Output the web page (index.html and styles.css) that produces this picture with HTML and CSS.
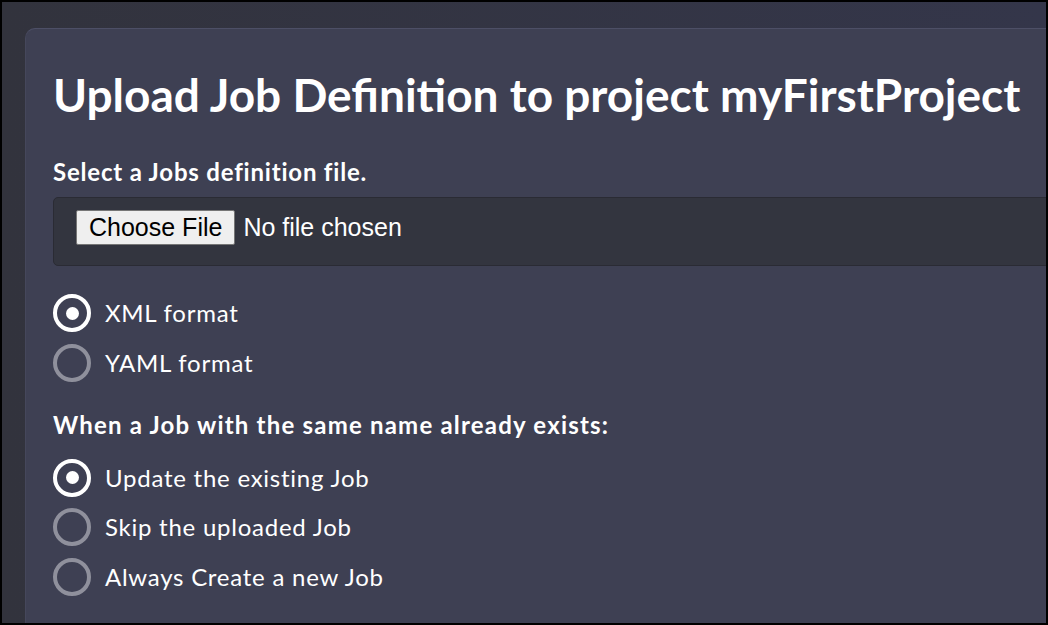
FILE: index.html
```html
<!DOCTYPE html>
<html lang="en">
<head>
    <meta charset="UTF-8">
    <meta name="viewport" content="width=device-width, initial-scale=1.0">
    <title>Upload Job Definition</title>
    <link rel="stylesheet" href="styles.css">
</head>
<body>
    <div class="frame">
        <div class="card">
            <h1>Upload Job Definition to project myFirstProject</h1>

            <form id="uploadForm">
                <label class="field-label" for="xmlBatch">Select a Jobs definition file.</label>
                <div class="file-box">
                    <input type="file" id="xmlBatch" name="xmlBatch">
                </div>

                <div class="radio-group">
                    <label class="radio">
                        <input type="radio" name="fileformat" value="xml" checked>
                        <span>XML format</span>
                    </label>
                    <label class="radio">
                        <input type="radio" name="fileformat" value="yaml">
                        <span>YAML format</span>
                    </label>
                </div>

                <p class="field-label field-label-wide">When a Job with the same name already exists:</p>

                <div class="radio-group">
                    <label class="radio">
                        <input type="radio" name="dupeOption" value="update" checked>
                        <span>Update the existing Job</span>
                    </label>
                    <label class="radio">
                        <input type="radio" name="dupeOption" value="skip">
                        <span>Skip the uploaded Job</span>
                    </label>
                    <label class="radio">
                        <input type="radio" name="dupeOption" value="create">
                        <span>Always Create a new Job</span>
                    </label>
                </div>
            </form>
        </div>
    </div>
</body>
</html>
```

FILE: styles.css
```css
body {
    margin: 0;
    padding: 0;
    font-family: Lato, "Noto Sans", sans-serif;
    color: #ffffff;
}

.frame {
    box-sizing: border-box;
    width: 1048px;
    height: 625px;
    border: 2px solid #000000;
    background: linear-gradient(90deg, #32333d 0%, #34364a 100%);
    overflow: hidden;
    padding: 26px 0 0 23px;
}

.card {
    width: 1100px;
    min-height: 700px;
    background-color: #3e4053;
    border-top: 1px solid #4d4f66;
    border-left: 1px solid #45475b;
    border-radius: 10px 0 0 0;
    padding: 36px 27px;
}

h1 {
    margin: 0 0 32px;
    font-size: 46px;
    font-weight: 700;
    line-height: 60px;
}

.field-label {
    display: block;
    margin: 0 0 10px;
    font-size: 24px;
    font-weight: 700;
    line-height: 30px;
    letter-spacing: 0.8px;
}

.field-label-wide {
    margin-bottom: 19px;
    letter-spacing: 1.2px;
}

.file-box {
    width: 1100px;
    height: 69px;
    box-sizing: border-box;
    padding: 12px 22px;
    background-color: #33353f;
    border: 1px solid #2a2b34;
    border-radius: 5px;
    margin-bottom: 28px;
}

.file-box input {
    font-family: "Liberation Sans", Arial, sans-serif;
    font-size: 25px;
    color: #ffffff;
}

.file-box input::file-selector-button {
    font-family: "Liberation Sans", Arial, sans-serif;
    font-size: 25px;
    padding: 2px 12px;
    margin-right: 8px;
    background-color: #efefef;
    border: 1px solid #767676;
    border-radius: 2px;
    color: #000000;
}

.radio-group {
    display: flex;
    flex-direction: column;
    gap: 11.5px;
    margin-bottom: 28px;
}

.radio {
    display: flex;
    align-items: center;
    gap: 14px;
    font-size: 24px;
    line-height: 38px;
    letter-spacing: 0.75px;
}

.radio input {
    appearance: none;
    box-sizing: border-box;
    width: 38px;
    height: 38px;
    margin: 0;
    border: 4px solid #8f909c;
    border-radius: 50%;
    display: grid;
    place-content: center;
}

.radio input:checked {
    border-color: #ffffff;
}

.radio input:checked::before {
    content: "";
    width: 13px;
    height: 13px;
    border-radius: 50%;
    background-color: #ffffff;
}
```
